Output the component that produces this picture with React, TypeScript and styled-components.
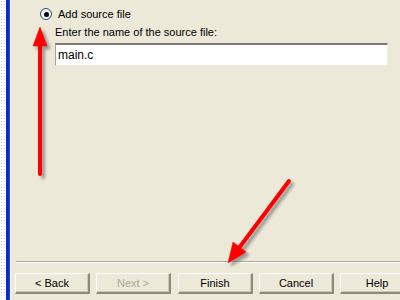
import React from "react";
import styled, { createGlobalStyle } from "styled-components";

const Global = createGlobalStyle`
  html, body { margin: 0; padding: 0; background: #ece9d8; }
  #root { width: 400px; height: 300px; overflow: hidden; }
`;

const Frame = styled.div`
  position: relative;
  width: 400px;
  height: 300px;
  display: flex;
  font-family: "Liberation Sans", Arial, sans-serif;
  font-size: 11px;
  color: #000;
  background: #ece9d8;
  overflow: hidden;
`;

const Desktop = styled.div`
  flex: none;
  width: 6px;
  background-color: #ffffff;
  background-image: radial-gradient(#c9d6ef 0.6px, transparent 0.8px);
  background-size: 3px 3px;
`;

const WindowBorder = styled.div`
  flex: none;
  width: 4px;
  background: linear-gradient(to right, #0831d9, #0a24b8 50%, #1c4fe0);
`;

const Body = styled.div`
  flex: 1;
  min-width: 0;
  display: flex;
  flex-direction: column;
  border-left: 1px solid #f6f4ec;
  overflow: hidden;
`;

const Content = styled.div`
  flex: 1;
  display: flex;
  flex-direction: column;
  padding: 7px 12px 0 29px;
`;

const RadioRow = styled.label`
  display: flex;
  align-items: center;
  gap: 6px;
  height: 14px;
`;

const RadioCircle = styled.span`
  flex: none;
  width: 12px;
  height: 12px;
  border-radius: 50%;
  box-sizing: border-box;
  border: 1px solid #1c5180;
  background: radial-gradient(circle at 60% 60%, #ffffff 40%, #dcd9cd 100%);
  display: flex;
  align-items: center;
  justify-content: center;
  &::after {
    content: "";
    width: 5px;
    height: 5px;
    border-radius: 50%;
    background: #000;
  }
`;

const Indent = styled.div`
  padding-left: 15px;
  display: flex;
  flex-direction: column;
`;

const Prompt = styled.div`
  margin-top: 4px;
  height: 14px;
  line-height: 14px;
`;

const Field = styled.div`
  margin-top: 4px;
  height: 23px;
  box-sizing: border-box;
  background: #fff;
  border-top: 2px solid #7b7a73;
  border-left: 1px solid #a6a498;
  border-right: 1px solid #f0eee4;
  border-bottom: 1px solid #f0eee4;
  padding: 2px 3px 0 2px;
  font-size: 12px;
  line-height: 17px;
`;

const Footer = styled.div`
  display: flex;
  flex-direction: column;
  padding-left: 5px;
`;

const Separator = styled.div`
  height: 1px;
  background: #aca899;
  border-bottom: 1px solid #ffffff;
`;

const ButtonRow = styled.div`
  display: flex;
  gap: 6px;
  padding: 10px 0 6px 0;
  margin-left: -1px;
`;

const Button = styled.div<{ $disabled?: boolean; $gapBefore?: boolean }>`
  width: 75px;
  flex: none;
  height: 21px;
  box-sizing: border-box;
  display: flex;
  align-items: center;
  justify-content: center;
  background: #ece9d8;
  border-top: 1px solid #fefefe;
  border-left: 1px solid #fefefe;
  border-right: 2px solid #8d8a7c;
  border-bottom: 2px solid #8d8a7c;
  box-shadow: inset -1px -1px 0 #cfcbbb;
  color: ${(p) => (p.$disabled ? "#aca899" : "#000")};
  margin-left: ${(p) => (p.$gapBefore ? "1px" : "0")};
  font-size: 11px;
`;

const Overlay = styled.svg`
  position: absolute;
  left: 0;
  top: 0;
  pointer-events: none;
`;

function Arrows() {
  return (
    <Overlay width="400" height="300" viewBox="0 0 400 300">
      <defs>
        <filter id="sh" x="-50%" y="-50%" width="200%" height="200%">
          <feGaussianBlur stdDeviation="1.6" />
        </filter>
      </defs>
      <g transform="translate(3,3)" fill="#555" stroke="#555" opacity="0.55" filter="url(#sh)">
        <line x1="40" y1="174" x2="40" y2="42" strokeWidth="4" strokeLinecap="round" />
        <polygon points="40,27 33,46 47,46" />
        <line x1="289" y1="181" x2="239" y2="248" strokeWidth="4" strokeLinecap="round" />
        <polygon points="228,263 233,242 246,252" />
      </g>
      <g fill="#ff0000" stroke="#ff0000">
        <line x1="40" y1="174" x2="40" y2="42" strokeWidth="4" strokeLinecap="round" />
        <polygon points="40,27 33,46 47,46" strokeWidth="0.5" />
        <line x1="289" y1="181" x2="239" y2="248" strokeWidth="4" strokeLinecap="round" />
        <polygon points="228,263 233,242 246,252" strokeWidth="0.5" />
      </g>
    </Overlay>
  );
}

export default function App() {
  return (
    <>
      <Global />
      <Frame>
        <Desktop />
        <WindowBorder />
        <Body>
          <Content>
            <RadioRow>
              <RadioCircle />
              <span>Add source file</span>
            </RadioRow>
            <Indent>
              <Prompt>Enter the name of the source file:</Prompt>
              <Field>main.c</Field>
            </Indent>
          </Content>
          <Footer>
            <Separator />
            <ButtonRow>
              <Button>&lt; Back</Button>
              <Button $disabled>Next &gt;</Button>
              <Button $gapBefore>Finish</Button>
              <Button>Cancel</Button>
              <Button>Help</Button>
            </ButtonRow>
          </Footer>
        </Body>
        <Arrows />
      </Frame>
    </>
  );
}
